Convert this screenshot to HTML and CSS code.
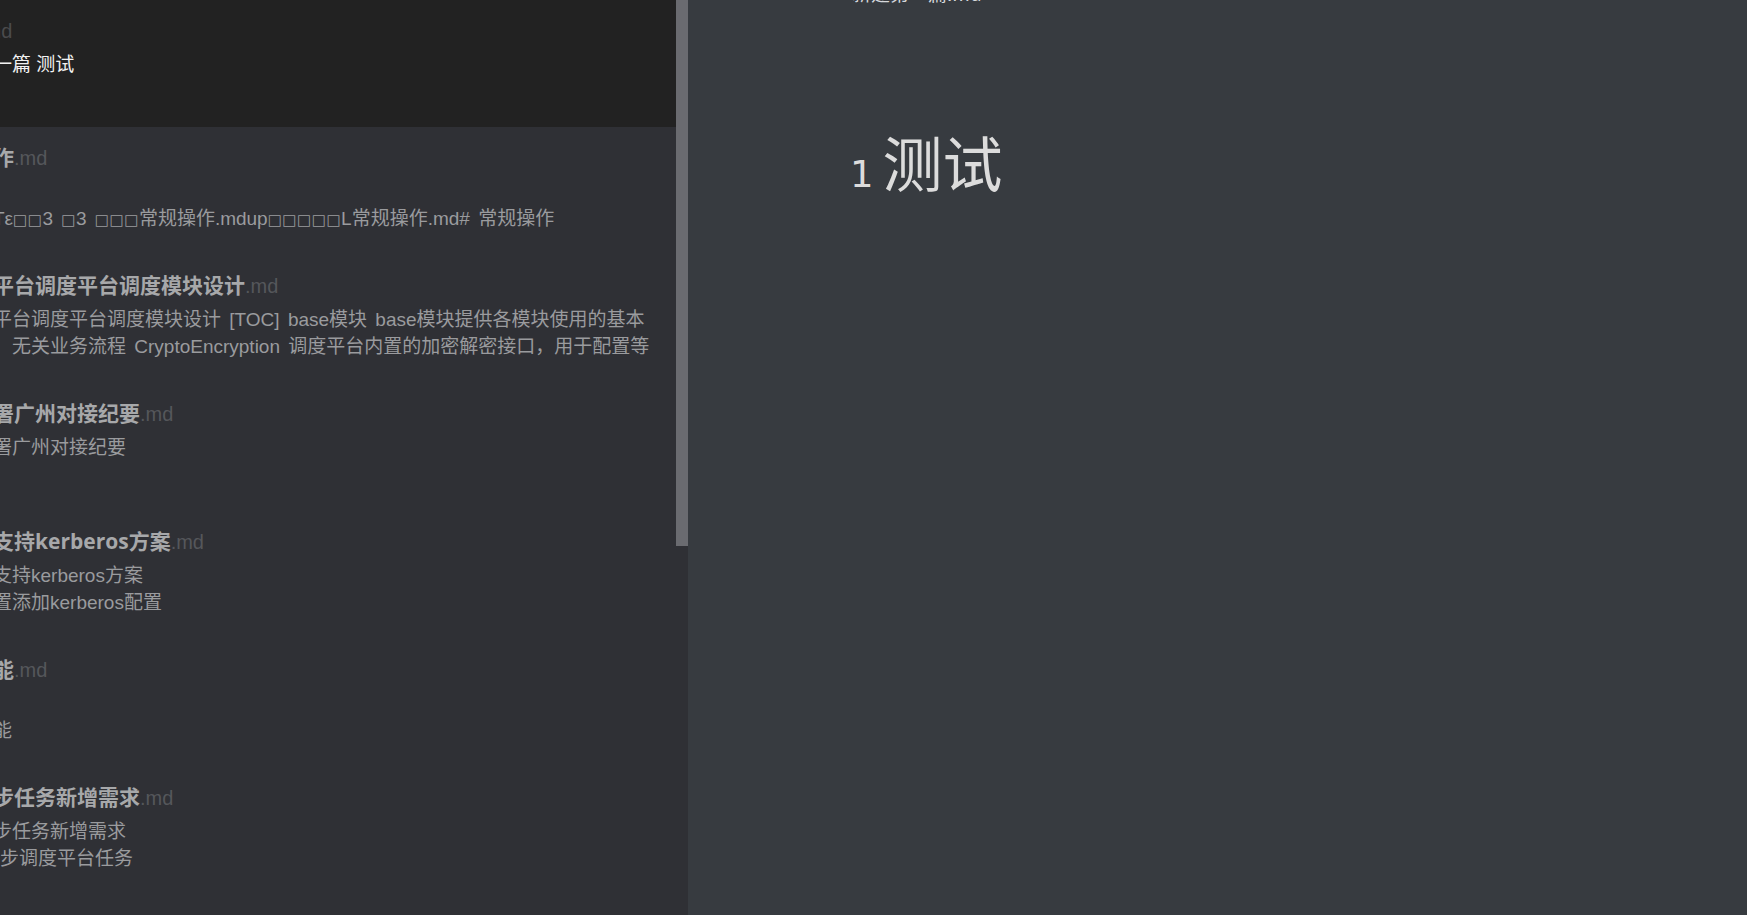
FILE: index.html
```html
<!DOCTYPE html>
<html lang="zh-CN">
<head>
<meta charset="utf-8">
<title>笔记</title>
<link rel="stylesheet" href="styles.css">
</head>
<body>
<div class="app">
  <aside class="sidebar">
    <div class="list">
      <div class="item active">
        <div class="title"><span class="clip-title">测试</span><span class="ext">.md</span></div>
        <div class="snippet">一篇 测试</div>
      </div>
      <div class="item">
        <div class="title">作<span class="ext">.md</span></div>
        <div class="snippet"><span class="blank">&nbsp;</span><br>Tε<span class="tofu">□□</span>3 <span class="tofu">□</span>3 <span class="tofu">□□□</span>常规操作.mdup<span class="tofu">□□□□□</span>L常规操作.md# 常规操作</div>
      </div>
      <div class="item">
        <div class="title">平台调度平台调度模块设计<span class="ext">.md</span></div>
        <div class="snippet">平台调度平台调度模块设计 [TOC] base模块 base模块提供各模块使用的基本<br>，无关业务流程 CryptoEncryption 调度平台内置的加密解密接口，用于配置等</div>
      </div>
      <div class="item">
        <div class="title">署广州对接纪要<span class="ext">.md</span></div>
        <div class="snippet">署广州对接纪要</div>
      </div>
      <div class="item">
        <div class="title">支持kerberos方案<span class="ext">.md</span></div>
        <div class="snippet">支持kerberos方案<br>置添加kerberos配置</div>
      </div>
      <div class="item">
        <div class="title">能<span class="ext">.md</span></div>
        <div class="snippet"><span class="blank">&nbsp;</span><br>能</div>
      </div>
      <div class="item">
        <div class="title">步任务新增需求<span class="ext">.md</span></div>
        <div class="snippet">步任务新增需求<br><span class="shift">同步调度平台任务</span></div>
      </div>
      <div class="item">
        <div class="title">功能<span class="ext">.md</span></div>
        <div class="snippet">功能</div>
      </div>
    </div>
  </aside>
  <div class="scrollbar"><div class="thumb"></div></div>
  <main class="editor">
    <div class="filename">新建第一篇.md</div>
    <h1 class="heading"><span class="num">1</span>测试</h1>
  </main>
</div>
</body>
</html>
```

FILE: styles.css
```css
html, body {
  margin: 0;
  padding: 0;
  background: #373b40;
  overflow: hidden;
}

body {
  font-family: "Liberation Sans", "Noto Sans CJK SC", sans-serif;
}

.app {
  display: flex;
  width: 1747px;
  height: 915px;
  overflow: hidden;
}

.sidebar {
  flex: none;
  width: 676px;
  background: #2f3035;
  overflow: hidden;
}

.list {
  margin-left: -7px;
}

.item {
  height: 128px;
  box-sizing: border-box;
  padding-top: 14px;
  white-space: nowrap;
}

.item.active {
  height: 127px;
  background: #222222;
}

.title {
  font-family: "Open Sans", "Noto Sans CJK SC", sans-serif;
  font-size: 21px;
  font-weight: bold;
  line-height: 32px;
  color: #a7a8aa;
}

.ext {
  font-family: "Liberation Sans", "Noto Sans CJK SC", sans-serif;
  font-weight: normal;
  font-size: 20px;
  color: #55575b;
}

.active .ext {
  color: #4b4b4d;
}

.clip-title {
  display: inline-block;
  width: 0;
  overflow: hidden;
  margin-left: -14px;
  vertical-align: top;
}

.snippet {
  margin-top: 4px;
  font-size: 19px;
  line-height: 27px;
  word-spacing: 3px;
  color: #9a9b9e;
}

.active .snippet {
  color: #f2f2f2;
  word-spacing: 0;
}

.tofu {
  font-family: "DejaVu Sans", sans-serif;
  font-size: 15px;
  letter-spacing: 0.5px;
}

.shift {
  display: inline-block;
  margin-left: -12px;
}

.scrollbar {
  flex: none;
  width: 12px;
  background: #2f3035;
}

.thumb {
  height: 546px;
  background: #6a6b70;
}

.editor {
  flex: 1;
  background: #373b40;
  padding-left: 162px;
}

.filename {
  margin-top: -19px;
  padding-left: 2px;
  font-family: "Noto Sans CJK SC", sans-serif;
  font-size: 19px;
  line-height: 24px;
  color: #d6d8dc;
}

.heading {
  margin: 120px 0 0 0;
  font-family: "Noto Sans CJK SC", sans-serif;
  font-size: 60px;
  font-weight: normal;
  line-height: 72px;
  color: #dcdcdc;
}

.num {
  font-family: "DejaVu Sans", sans-serif;
  font-size: 37px;
  margin-right: 9px;
}
```
